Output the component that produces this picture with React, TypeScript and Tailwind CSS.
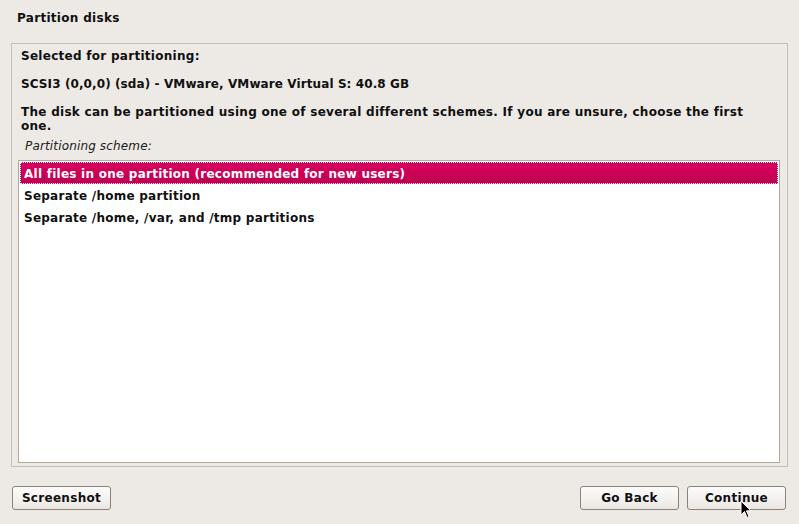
const options = [
  'All files in one partition (recommended for new users)',
  'Separate /home partition',
  'Separate /home, /var, and /tmp partitions',
];

function Button({ label, className }: { label: string; className?: string }) {
  return (
    <button
      className={
        'h-[24px] w-[99px] rounded-[3px] border border-[#8b8377] bg-gradient-to-b from-[#fdfcfb] to-[#ebe8e3] text-[12px] font-bold tracking-[0.3px] text-[#101010] ' +
        (className ?? '')
      }
    >
      {label}
    </button>
  );
}

export default function App() {
  return (
    <div
      className="relative flex h-[524px] w-[799px] flex-col bg-[#edeae6] text-[#101010]"
      style={{ fontFamily: '"DejaVu Sans", sans-serif' }}
    >
      {/* Title */}
      <div className="flex h-[35px] items-center pl-[17px] pt-[1px] text-[12px] font-bold tracking-[0.3px]">
        Partition disks
      </div>

      {/* Frame */}
      <div className="mx-[11px] mt-[8px] flex h-[424px] flex-col border border-[#c4bdb2] pb-[3px] pl-[6px] pr-[7px]">
        <div className="pl-[3px] text-[12px] font-bold leading-[14px] tracking-[0.28px]">
          <p className="mt-[5px]">Selected for partitioning:</p>
          <p className="mt-[14px] tracking-[0.1px]">SCSI3 (0,0,0) (sda) - VMware, VMware Virtual S: 40.8 GB</p>
          <p className="mt-[14px] max-w-[738px]">
            The disk can be partitioned using one of several different schemes. If you are unsure, choose the first
            one.
          </p>
        </div>
        <p className="mt-[6px] pl-[7px] text-[12px] italic leading-[14px] tracking-[0.15px] text-[#202020]">
          Partitioning scheme:
        </p>

        <div className="mt-[7px] flex-1 border border-[#b3aa9c] bg-white p-[1px]">
          {options.map((o, i) =>
            i === 0 ? (
              <div
                key={o}
                className="flex h-[22px] items-center border border-dotted border-white bg-gradient-to-b from-[#d9005e] to-[#c00050] pl-[3px] pt-[1px] text-[12px] font-bold tracking-[0.25px] text-white"
              >
                {o}
              </div>
            ) : (
              <div key={o} className="flex h-[22px] items-center pl-[4px] pt-[1px] text-[12px] font-bold tracking-[0.25px]">
                {o}
              </div>
            )
          )}
        </div>
      </div>

      {/* Buttons */}
      <div className="mt-[19px] flex items-center pl-[12px] pr-[13px]">
        <Button label="Screenshot" />
        <div className="flex-1" />
        <Button label="Go Back" className="mr-[8px]" />
        <Button label="Continue" />
      </div>

      {/* Mouse pointer */}
      <svg className="absolute left-[740px] top-[500px]" width="13" height="20" viewBox="0 0 13 20">
        <path d="M1 1 L1 15 L4.5 11.5 L7 17.5 L9 16.5 L6.5 10.8 L11 10.8 Z" fill="#000" stroke="#fff" strokeWidth="1" />
      </svg>
    </div>
  );
}
